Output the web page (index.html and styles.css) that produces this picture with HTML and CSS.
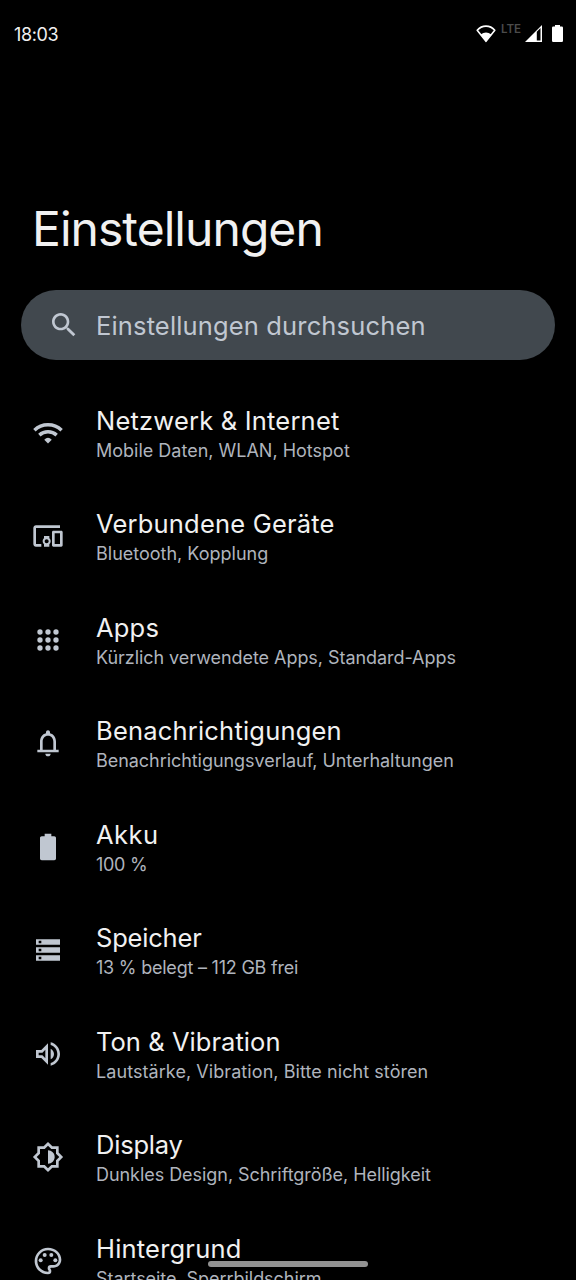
FILE: index.html
```html
<!DOCTYPE html>
<html lang="de">
<head>
<meta charset="utf-8">
<title>Einstellungen</title>
<link rel="stylesheet" href="styles.css">
</head>
<body>
<div class="screen">
  <header class="status">
    <span class="clock">18:03</span>
    <div class="indicators">
      <svg class="status-wifi" width="20" height="18" viewBox="0 0 20 18"><path d="M1.200 5.200C6 -.2 14 -.2 18.800 5.200L10 16.300z" fill="none" stroke="#fff" stroke-width="1.600" stroke-linejoin="round"/><path d="M4.600 9.500Q10 5.500 15.400 9.500L10 16.500z" fill="#fff"/></svg>
      <span class="lte">LTE</span>
      <svg class="status-cell" width="17" height="17" viewBox="0 0 17 17"><path fill="#fff" fill-rule="evenodd" d="M0 17 17 0V17zM11.800 6.700V15.500H15.500V3z"/></svg>
      <svg class="status-battery" width="11" height="17" viewBox="0 0 11 17"><path fill="#fff" d="M3 0H8V1.500H9.800Q11 1.500 11 2.700V15.800Q11 17 9.800 17H1.200Q0 17 0 15.800V2.700Q0 1.500 1.200 1.500H3z"/></svg>
    </div>
  </header>
  <h1 class="heading">Einstellungen</h1>
  <div class="search">
    <svg class="icon" viewBox="0 0 24 24"><path d="M15.500 14h-.79l-.28-.27C15.410 12.590 16 11.110 16 9.500 16 5.910 13.090 3 9.500 3S3 5.910 3 9.500 5.910 16 9.500 16c1.610 0 3.090-.59 4.230-1.570l.27.28v.79l5 4.990L20.490 19l-4.990-5zm-6 0C7.010 14 5 11.990 5 9.500S7.010 5 9.500 5 14 7.010 14 9.500 11.990 14 9.500 14z"/></svg>
    <span class="hint">Einstellungen durchsuchen</span>
  </div>
  <main class="list">
    <div class="row network">
      <svg class="icon" viewBox="0 0 24 24"><g fill="none" stroke="#c0c7d1" stroke-width="2.600"><path d="M1.800 9.900C7.500 4.400 16.500 4.400 22.200 9.900"/><path d="M5.500 13.600C9.200 10.300 14.800 10.300 18.500 13.600"/></g><path d="M9.200 17Q12 14.200 14.800 17L12 19.800z"/></svg>
      <div class="copy"><div class="name">Netzwerk &amp; Internet</div><div class="detail">Mobile Daten, WLAN, Hotspot</div></div>
    </div>
    <div class="row devices">
      <svg class="icon" viewBox="0 0 24 24"><path d="M3 6h18V4H3c-1.100 0-2 .9-2 2v12c0 1.100.9 2 2 2h4v-2H3V6zm10 6H9v1.780c-.61.55-1 1.330-1 2.220s.39 1.670 1 2.220V20h4v-1.780c.61-.55 1-1.340 1-2.220s-.39-1.670-1-2.220V12zm-2 5.500c-.83 0-1.500-.67-1.500-1.500s.67-1.500 1.500-1.500 1.500.67 1.500 1.500-.67 1.500-1.500 1.500zM22 8h-6c-.5 0-1 .5-1 1v10c0 .5.5 1 1 1h6c.5 0 1-.5 1-1V9c0-.5-.5-1-1-1zm-1 10h-4v-8h4v8z"/></svg>
      <div class="copy"><div class="name">Verbundene Geräte</div><div class="detail">Bluetooth, Kopplung</div></div>
    </div>
    <div class="row apps">
      <svg class="icon" viewBox="0 0 24 24"><circle cx="6" cy="6" r="2"/><circle cx="12" cy="6" r="2"/><circle cx="18" cy="6" r="2"/><circle cx="6" cy="12" r="2"/><circle cx="12" cy="12" r="2"/><circle cx="18" cy="12" r="2"/><circle cx="6" cy="18" r="2"/><circle cx="12" cy="18" r="2"/><circle cx="18" cy="18" r="2"/></svg>
      <div class="copy"><div class="name">Apps</div><div class="detail">Kürzlich verwendete Apps, Standard-Apps</div></div>
    </div>
    <div class="row notifications">
      <svg class="icon" viewBox="0 0 24 24"><path fill-rule="evenodd" d="M18 17v-6c0-3.070-1.630-5.640-4.500-6.320V4c0-.83-.67-1.500-1.500-1.500s-1.500.67-1.500 1.500v.68C7.640 5.360 6 7.920 6 11v6H4v2h16v-2zm-2 0H8v-6c0-2.480 1.510-4.500 4-4.500s4 2.020 4 4.500zM12 22c1.100 0 2-.9 2-2h-4c0 1.100.9 2 2 2z"/></svg>
      <div class="copy"><div class="name">Benachrichtigungen</div><div class="detail">Benachrichtigungsverlauf, Unterhaltungen</div></div>
    </div>
    <div class="row battery">
      <svg class="icon" viewBox="0 0 24 24"><path d="M16.700 4H14.500V2h-5v2H7.300C6.600 4 6 4.600 6 5.300v15.400c0 .7.600 1.300 1.300 1.300h9.400c.7 0 1.300-.6 1.300-1.300V5.300c0-.7-.6-1.300-1.300-1.300z"/></svg>
      <div class="copy"><div class="name">Akku</div><div class="detail">100 %</div></div>
    </div>
    <div class="row storage">
      <svg class="icon" viewBox="0 0 24 24"><path fill-rule="evenodd" d="M3 20h18V16H3zm2-3h2v2H5zM3 4v4h18V4zm4 3H5V5h2zM3 14h18v-4H3zm2-3h2v2H5z"/></svg>
      <div class="copy"><div class="name">Speicher</div><div class="detail">13 % belegt – 112 GB frei</div></div>
    </div>
    <div class="row sound">
      <svg class="icon" viewBox="0 0 24 24"><path d="M3 9v6h4l5 5V4L7 9H3zm7-.17v6.340L7.830 13H5v-2h2.830L10 8.830zM16.500 12c0-1.770-1.020-3.290-2.500-4.030v8.050c1.480-.73 2.500-2.250 2.500-4.020zM14 3.230v2.060c2.890.86 5 3.540 5 6.710s-2.110 5.850-5 6.710v2.060c4.010-.91 7-4.490 7-8.770s-2.990-7.860-7-8.770z"/></svg>
      <div class="copy"><div class="name">Ton &amp; Vibration</div><div class="detail">Lautstärke, Vibration, Bitte nicht stören</div></div>
    </div>
    <div class="row display">
      <svg class="icon" viewBox="0 0 24 24"><path d="M20 8.690V4h-4.690L12 .69 8.690 4H4v4.690L.69 12 4 15.310V20h4.690L12 23.310 15.310 20H20v-4.690L23.310 12 20 8.690zm-2 5.790V18h-3.520L12 20.480 9.520 18H6v-3.520L3.520 12 6 9.520V6h3.520L12 3.520 14.480 6H18v3.520L20.480 12 18 14.480z"/><path d="M12 7v10c2.760 0 5-2.240 5-5s-2.240-5-5-5z"/></svg>
      <div class="copy"><div class="name">Display</div><div class="detail">Dunkles Design, Schriftgröße, Helligkeit</div></div>
    </div>
    <div class="row wallpaper">
      <svg class="icon" viewBox="0 0 24 24"><path d="M12 22C6.490 22 2 17.510 2 12S6.490 2 12 2s10 4.040 10 9c0 3.310-2.690 6-6 6h-1.770c-.28 0-.5.220-.5.500 0 .120.050.230.130.330.410.470.640 1.060.640 1.670A2.500 2.500 0 0 1 12 22zm0-18c-4.410 0-8 3.590-8 8s3.590 8 8 8c.28 0 .5-.22.500-.5a.54.54 0 0 0-.14-.35c-.41-.46-.63-1.050-.63-1.650a2.500 2.500 0 0 1 2.500-2.500H16c2.210 0 4-1.790 4-4 0-3.860-3.590-7-8-7z"/><circle cx="6.500" cy="11.500" r="1.500"/><circle cx="9.500" cy="7.500" r="1.500"/><circle cx="14.500" cy="7.500" r="1.500"/><circle cx="17.500" cy="11.500" r="1.500"/></svg>
      <div class="copy"><div class="name">Hintergrund</div><div class="detail">Startseite, Sperrbildschirm</div></div>
    </div>
  </main>
  <div class="gesture-bar"></div>
</div>
</body>
</html>
```
FILE: styles.css
```css
* { box-sizing: border-box; }
body { margin: 0; background: #000; }
.screen {
  position: relative;
  width: 576px;
  height: 1280px;
  overflow: hidden;
  background: #000;
  color: #f1f1f1;
  font-family: Inter, "Noto Sans", sans-serif;
  white-space: nowrap;
}
.status {
  display: flex;
  justify-content: space-between;
  height: 68px;
  padding: 0 13px 0 14px;
  align-items: center;
}
.clock { font-size: 18px; letter-spacing: -0.4px; }
.indicators { display: flex; align-items: flex-start; height: 19px; }
.status-wifi { margin-right: 5px; }
.lte { width: 20px; margin-right: 4px; font-size: 11.500px; line-height: 9px; letter-spacing: 0; font-weight: 600; color: #4b4b4b; }
.status-cell { margin-right: 10px; }
.heading {
  margin: 131px 0 0 32px;
  font-size: 48px;
  line-height: 60px;
  font-weight: 400;
  letter-spacing: -0.95px;
}
.search {
  display: flex;
  align-items: center;
  height: 70px;
  margin: 31px 21px 0;
  padding-left: 27px;
  border-radius: 35px;
  background: #41484e;
}
.icon { flex: none; width: 32px; height: 32px; fill: #c0c7d1; }
.hint { padding-top: 1px; margin-left: 16px; font-size: 25.500px; letter-spacing: 0.15px; color: #c0c7d1; }
.list { padding-top: 21px; }
.row { display: flex; align-items: center; height: 103.500px; padding-left: 32px; gap: 32px; }
.copy { padding-top: 4px; }
.name { font-size: 25.500px; line-height: 31px; letter-spacing: 0.2px; }
.detail { font-size: 18px; line-height: 29px; color: #afb4bd; }

/* Optical spacing of the individual labels */
.apps .detail, .notifications .detail, .display .detail, .wallpaper .detail { letter-spacing: -0.050px; }
.battery .name { letter-spacing: 0.5px; }
.battery .detail { letter-spacing: -0.300px; }
.storage .name, .display .name { letter-spacing: -0.200px; }
.storage .detail { letter-spacing: -0.220px; }
.sound .name { letter-spacing: 0.050px; }
.sound .detail { letter-spacing: 0.070px; }

.gesture-bar {
  position: absolute;
  left: 208px;
  bottom: 13px;
  width: 160px;
  height: 6px;
  border-radius: 3px;
  background: #929292;
}
```
